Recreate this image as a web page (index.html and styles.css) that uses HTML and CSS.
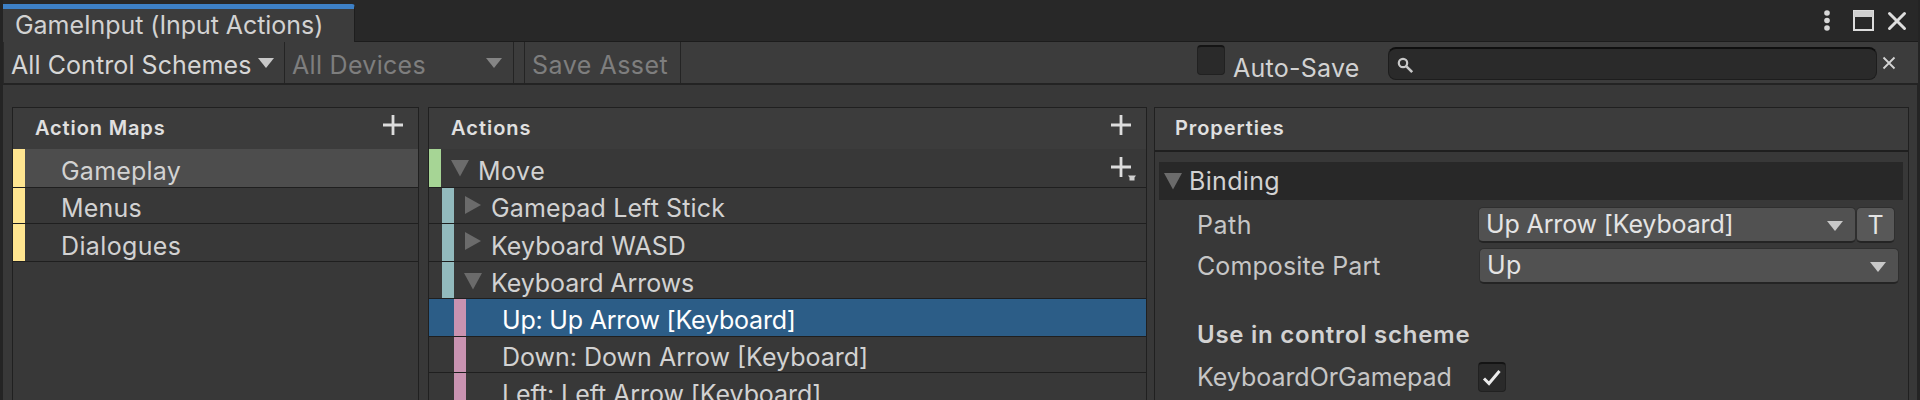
FILE: index.html
```html
<!DOCTYPE html>
<html lang="en">
<head>
<meta charset="utf-8">
<title>GameInput (Input Actions)</title>
<link rel="stylesheet" href="styles.css">
</head>
<body>
<div class="window">
  <header class="tabbar">
    <div class="tab"><span class="t-title">GameInput (Input Actions)</span></div>
    <div class="window-icons">
      <svg width="8" height="22" viewBox="0 0 8 22" fill="#d8d8d8"><circle cx="4" cy="3" r="2.8"/><circle cx="4" cy="10.5" r="2.8"/><circle cx="4" cy="18" r="2.8"/></svg>
      <svg class="max" width="21" height="21" viewBox="0 0 21 21"><path d="M1 1h19v19H1z" fill="none" stroke="#dcdcdc" stroke-width="2"/><path d="M1 1h19v6H1z" fill="#cfcfcf"/></svg>
      <svg class="close" width="20" height="20" viewBox="0 0 20 20"><path d="M2.5 2.5l15 15M17.5 2.5l-15 15" stroke="#dedede" stroke-width="3" stroke-linecap="round"/></svg>
    </div>
  </header>
  <div class="toolbar">
    <div class="tool schemes"><span class="t-schemes">All Control Schemes</span><svg width="16" height="10" viewBox="0 0 16 10"><path d="M0 0h16L8 10z" fill="#c8c8c8"/></svg></div>
    <div class="tool devices"><span class="t-devices">All Devices</span><svg width="16" height="10" viewBox="0 0 16 10"><path d="M0 0h16L8 10z" fill="#858585"/></svg></div>
    <div class="tool gap"></div>
    <div class="tool save"><span class="t-save">Save Asset</span></div>
    <div class="auto"><span class="checkbox"></span><span class="t-auto">Auto-Save</span></div>
    <div class="search"><svg width="17" height="17" viewBox="0 0 17 17" fill="none" stroke="#c8c8c8"><circle cx="6" cy="6" r="4.2" stroke-width="2.2"/><path d="M9.4 9.4l5.8 5.8" stroke-width="2.6"/></svg></div>
    <svg class="clear" width="14" height="14" viewBox="0 0 14 14"><path d="M1.5 1.5l11 11M12.5 1.5l-11 11" stroke="#d4d4d4" stroke-width="1.8"/></svg>
  </div>
  <main class="panels">
    <section class="panel maps">
      <div class="head"><h2 class="t-maps">Action Maps</h2><svg class="plus" width="20" height="20" viewBox="0 0 20 20"><path d="M10 0v20M0 10h20" stroke="#dcdcdc" stroke-width="2.8"/></svg></div>
      <div class="rows">
        <div class="row current"><i class="bar yellow"></i><span class="label t-gameplay">Gameplay</span></div>
        <div class="row"><i class="bar yellow"></i><span class="label t-menus">Menus</span></div>
        <div class="row"><i class="bar yellow"></i><span class="label t-dialogues">Dialogues</span></div>
      </div>
    </section>
    <section class="panel actions">
      <div class="head"><h2 class="t-actions">Actions</h2><svg class="plus" width="20" height="20" viewBox="0 0 20 20"><path d="M10 0v20M0 10h20" stroke="#dcdcdc" stroke-width="2.8"/></svg></div>
      <div class="rows">
        <div class="row"><i class="bar green"></i><svg class="fold" width="18" height="17" viewBox="0 0 18 17"><path d="M0 0h18L9 16.500z" fill="#6b6b6b"/></svg><span class="label t-move">Move</span>
          <svg class="plus-menu" width="26" height="25" viewBox="0 0 26 25"><path d="M10 0v20M0 10h20" stroke="#dcdcdc" stroke-width="2.8"/><path d="M17 18.500h8l-1.500 2v3h-5v-3z" fill="#d0d0d0"/></svg></div>
        <div class="row level1"><i class="bar teal"></i><svg class="fold side" width="18" height="18" viewBox="0 0 18 18"><path d="M1 0v18L17 9z" fill="#6b6b6b"/></svg><span class="label t-stick">Gamepad Left Stick</span></div>
        <div class="row level1"><i class="bar teal"></i><svg class="fold side" width="18" height="18" viewBox="0 0 18 18"><path d="M1 0v18L17 9z" fill="#6b6b6b"/></svg><span class="label t-wasd">Keyboard WASD</span></div>
        <div class="row level1"><i class="bar teal"></i><svg class="fold" width="18" height="17" viewBox="0 0 18 17"><path d="M0 0h18L9 16.500z" fill="#6b6b6b"/></svg><span class="label t-arrows">Keyboard Arrows</span></div>
        <div class="row level2 selected"><i class="bar pink"></i><span class="label t-up">Up: Up Arrow [Keyboard]</span></div>
        <div class="row level2"><i class="bar pink"></i><span class="label t-down">Down: Down Arrow [Keyboard]</span></div>
        <div class="row level2"><i class="bar pink"></i><span class="label t-left">Left: Left Arrow [Keyboard]</span></div>
      </div>
    </section>
    <section class="panel props">
      <div class="head"><h2 class="t-props">Properties</h2></div>
      <div class="binding"><svg width="18" height="17" viewBox="0 0 18 17"><path d="M0 0h18L9 16.500z" fill="#6b6b6b"/></svg><span class="t-binding">Binding</span></div>
      <div class="field path"><span class="name t-path">Path</span>
        <div class="dropdown"><span class="t-value">Up Arrow [Keyboard]</span><svg width="16" height="10" viewBox="0 0 16 10"><path d="M0 0h16L8 10z" fill="#c8c8c8"/></svg></div>
        <button class="text-toggle">T</button></div>
      <div class="field part"><span class="name t-part">Composite Part</span>
        <div class="dropdown"><span class="t-upvalue">Up</span><svg width="16" height="10" viewBox="0 0 16 10"><path d="M0 0h16L8 10z" fill="#c8c8c8"/></svg></div></div>
      <h3 class="t-use">Use in control scheme</h3>
      <div class="field scheme"><span class="name t-kog">KeyboardOrGamepad</span>
        <span class="checkbox"><svg width="20" height="18" viewBox="0 0 20 18"><path d="M2 9.500l5 5L17.500 2" fill="none" stroke="#ececec" stroke-width="3"/></svg></span></div>
    </section>
  </main>
</div>
</body>
</html>
```
FILE: styles.css
```css
* { box-sizing: border-box; }
body {
  margin: 0;
  background: #242424;
  color: #d2d2d2;
  font: 25px/30px Inter, "Liberation Sans", sans-serif;
  letter-spacing: .5px;
  overflow: hidden;
}
span, h2, h3 { white-space: nowrap; }
h2, h3 { margin: 0; font-weight: 600; }
svg { display: block; flex: none; }
.window { height: 400px; width: 1920px; padding: 0 2px 0 3px; overflow: hidden; display: flex; flex-direction: column; }

.tabbar { height: 42px; flex: none; display: flex; justify-content: space-between; background: #282828; box-shadow: inset 0 -1px #1c1c1c; }
.tab { width: 352px; height: 38px; margin-top: 4px; padding: 3px 0 0 12px; background: #3c3c3c; border-top: 5px solid #3d80c6; border-right: 1px solid #1e1e1e; border-radius: 0 3px 0 0; line-height: 26px; }
.window-icons { display: flex; align-items: flex-start; padding: 10px 11px 0 0; }
.max { margin-left: 22px; }
.close { margin: 1px 0 0 13px; }

.toolbar { height: 43px; flex: none; display: flex; background: #3c3c3c; border-bottom: 2px solid #232323; border-left: 1px solid #292929; }
.tool { display: flex; align-items: flex-start; border-right: 1px solid #242424; padding-top: 8px; }
.tool svg { margin-top: 8px; }
.schemes { width: 281px; padding-left: 7px; justify-content: space-between; padding-right: 10px; color: #d6d6d6; }
.devices { width: 229px; padding-left: 7px; justify-content: space-between; padding-right: 11px; color: #7e7e7e; }
.gap { width: 11px; }
.save { width: 156px; padding-left: 7px; color: #7e7e7e; }
.auto { display: flex; margin-left: 516px; padding-top: 3px; width: 191px; }
.checkbox { width: 28px; height: 30px; flex: none; background: #2a2a2a; border: 1px solid #212121; border-top: 2px solid #141414; border-radius: 4px; }
.t-auto { margin: 8px 0 0 8px; }
.search { width: 489px; height: 33px; margin-top: 5px; background: #2a2a2a; border: 1px solid #1d1d1d; border-top: 2px solid #0f0f0f; border-radius: 8px; padding: 8px 0 0 8px; }
.clear { margin: 14px 0 0 5px; }

.panels { flex: 1; display: flex; background: #383838; padding: 22px 8px 0 9px; border-right: 1px solid #242424; }
.panel { flex: none; border: 1px solid #202020; border-bottom: 0; }
.maps { width: 407px; margin-right: 9px; }
.actions { width: 719px; margin-right: 7px; }
.props { width: 755px; }
.head { height: 41px; display: flex; justify-content: space-between; background: #3c3c3c; padding: 5px 15px 0 22px; font-size: 20px; }
h2 { font-size: 20px; line-height: 30px; color: #e0e0e0; }
.plus { margin-top: 2px; }
.rows { display: grid; grid-template-rows: 39px 36px 38px 37px 38px 36px 38px; }
.row { display: flex; align-items: flex-start; border-bottom: 1px solid #1f1f1f; }
.label { margin-top: 6px; }
.row:nth-child(1) .label { margin-top: 7px; }
.row:nth-child(2) .label { margin-top: 5px; }
.row:nth-child(3) .label { margin-top: 7px; }
.row:nth-child(6) .label { margin-top: 5px; }
.bar { width: 12px; align-self: stretch; flex: none; }
.yellow { background: #ffe590; }
.green { background: #a6d595; }
.teal { background: #92babd; }
.pink { background: #c993b1; }
.maps .label { margin-left: 36px; }
.current { background: #4d4d4d; }
.fold { margin: 11px 9px 0 10px; }
.side { margin-top: 8px; }
.level1 { padding-left: 13px; }
.level2 { padding-left: 25px; }
.level2 .label { margin-left: 36px; }
.selected { background: #2c5d87; color: #fff; }
.plus-menu { margin: 8px 9px 0 auto; }

.props .head { height: 44px; padding-left: 20px; border-bottom: 2px solid #1f1f1f; }
.binding { height: 38px; margin: 10px 5px 0 4px; padding: 4px 0 0 5px; background: #282828; display: flex; }
.binding svg { margin: 7px 7px 0 0; }
.field { display: flex; align-items: flex-start; padding-left: 42px; }
.name { width: 281px; flex: none; color: #c6c6c6; }
.path { margin-top: 7px; }
.dropdown { display: flex; justify-content: space-between; height: 36px; background: #515151; border: 1px solid #2f2f2f; border-bottom: 2px solid #242424; border-radius: 5px; padding: 1px 12px 0 7px; width: 378px; color: #e4e4e4; flex: none; }
.dropdown svg { margin-top: 12px; }
.path .name, .part .name { margin-top: 3px; }
.text-toggle { font: inherit; line-height: 30px; color: #e4e4e4; width: 39px; height: 36px; padding: 0; background: #585858; border: 1px solid #2f2f2f; border-bottom: 2px solid #242424; border-radius: 5px; }
.part { margin-top: 5px; }
.part .dropdown { width: 420px; margin-left: 1px; }
h3 { font-size: 24px; line-height: 30px; margin: 36px 0 0 42px; color: #d2d2d2; }
.scheme { margin-top: 12px; }
.scheme .checkbox { margin-top: 0; padding: 5px 0 0 3px; }

/* Tracking per text */
.t-title { letter-spacing: -.06px; }
.t-schemes { letter-spacing: .08px; }
.t-devices { letter-spacing: .3px; }
.t-auto { letter-spacing: .25px; }
.t-maps { letter-spacing: .86px; }
.t-actions { letter-spacing: 1px; }
.t-props { letter-spacing: .93px; }
.t-gameplay, .t-menus { letter-spacing: .22px; }
.t-dialogues { letter-spacing: .36px; }
.t-stick { letter-spacing: .13px; }
.t-wasd { letter-spacing: .03px; }
.t-arrows { letter-spacing: -.07px; }
.t-up { letter-spacing: -.2px; }
.t-down { letter-spacing: 0; }
.t-left { letter-spacing: -.07px; }
.t-binding { letter-spacing: .33px; }
.t-part { letter-spacing: .1px; }
.t-value { letter-spacing: -.14px; }
.t-use { letter-spacing: .75px; }
.t-kog { letter-spacing: -.04px; }
```
